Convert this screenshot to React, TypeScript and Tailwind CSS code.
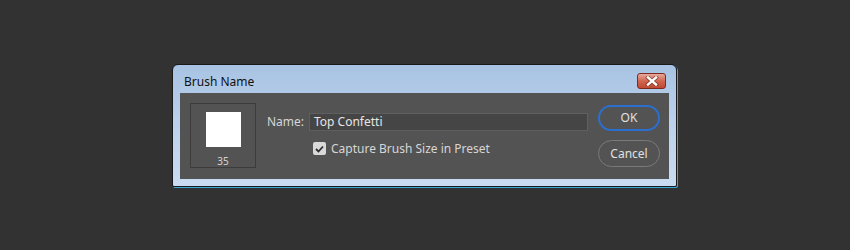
import React from "react";

export default function App() {
  return (
    <div className="w-[850px] h-[250px] bg-[#323232] pt-[64px] pl-[172px]" style={{ fontFamily: '"Noto Sans", "Open Sans", sans-serif' }}>
      <div className="w-[505px] h-[123px] rounded-t-[6px] rounded-b-[2px] border border-[#1a1a1a] bg-gradient-to-b from-[#a8c3e3] via-[#bcd2ec] to-[#c9dcf1] flex flex-col shadow-[1px_1px_0_#3aa9d8]">
        <div className="h-[28px] flex items-center justify-between pl-[11px] pr-[10px]">
          <span className="text-[12px] text-[#111] leading-none pt-[6px]">Brush Name</span>
          <div className="mt-[3px] w-[29px] h-[16px] rounded-[3px] border border-[#7d2a1f] bg-gradient-to-b from-[#e6a99c] via-[#d0654f] to-[#c04a33] flex items-center justify-center">
            <svg width="14" height="10" viewBox="0 0 14 10">
              <path d="M3 1.5 L11 8.5 M11 1.5 L3 8.5" stroke="#5a1e14" strokeWidth="4" strokeLinecap="square" opacity="0.6" />
              <path d="M3 1.5 L11 8.5 M11 1.5 L3 8.5" stroke="#ffffff" strokeWidth="2.4" strokeLinecap="square" />
            </svg>
          </div>
        </div>
        <div className="mx-[7px] h-[86px] bg-[#535353] flex pl-[10px] pr-[9px] pt-[10px]">
          <div className="w-[66px] h-[65px] border border-[#3c3c3c] flex flex-col items-center pt-[8px]">
            <div className="w-[35px] h-[35px] bg-white" />
            <span className="text-[10px] text-[#d4d4d4] leading-none mt-[9px]">35</span>
          </div>
          <div className="ml-[11px] pt-[10px] flex flex-col">
            <div className="flex items-center h-[18px]">
              <span className="text-[12px] text-[#d6d6d6] w-[42px]">Name:</span>
              <div className="w-[279px] h-[18px] bg-[#454545] border border-[#5f5f5f] flex items-center pl-[4px]">
                <span className="text-[12px] text-[#e6e6e6] leading-none">Top Confetti</span>
              </div>
            </div>
            <div className="flex items-center mt-[11px] pl-[46px]">
              <div className="w-[13px] h-[13px] rounded-[2px] bg-[#d9d9d9] flex items-center justify-center">
                <svg width="9" height="8" viewBox="0 0 9 8">
                  <path d="M1 4 L3.5 6.5 L8 1.5" stroke="#2e2e2e" strokeWidth="1.8" fill="none" />
                </svg>
              </div>
              <span className="ml-[5px] text-[12px] text-[#d6d6d6] leading-none">Capture Brush Size in Preset</span>
            </div>
          </div>
          <div className="ml-auto flex flex-col pt-[2px]">
            <div className="w-[62px] h-[26px] rounded-full border-2 border-[#2b6fd0] flex items-center justify-center">
              <span className="text-[12px] text-[#e0e0e0] leading-none">OK</span>
            </div>
            <div className="mt-[9px] w-[62px] h-[27px] rounded-full border border-[#7a7a7a] flex items-center justify-center">
              <span className="text-[12px] text-[#e0e0e0] leading-none">Cancel</span>
            </div>
          </div>
        </div>
      </div>
    </div>
  );
}
